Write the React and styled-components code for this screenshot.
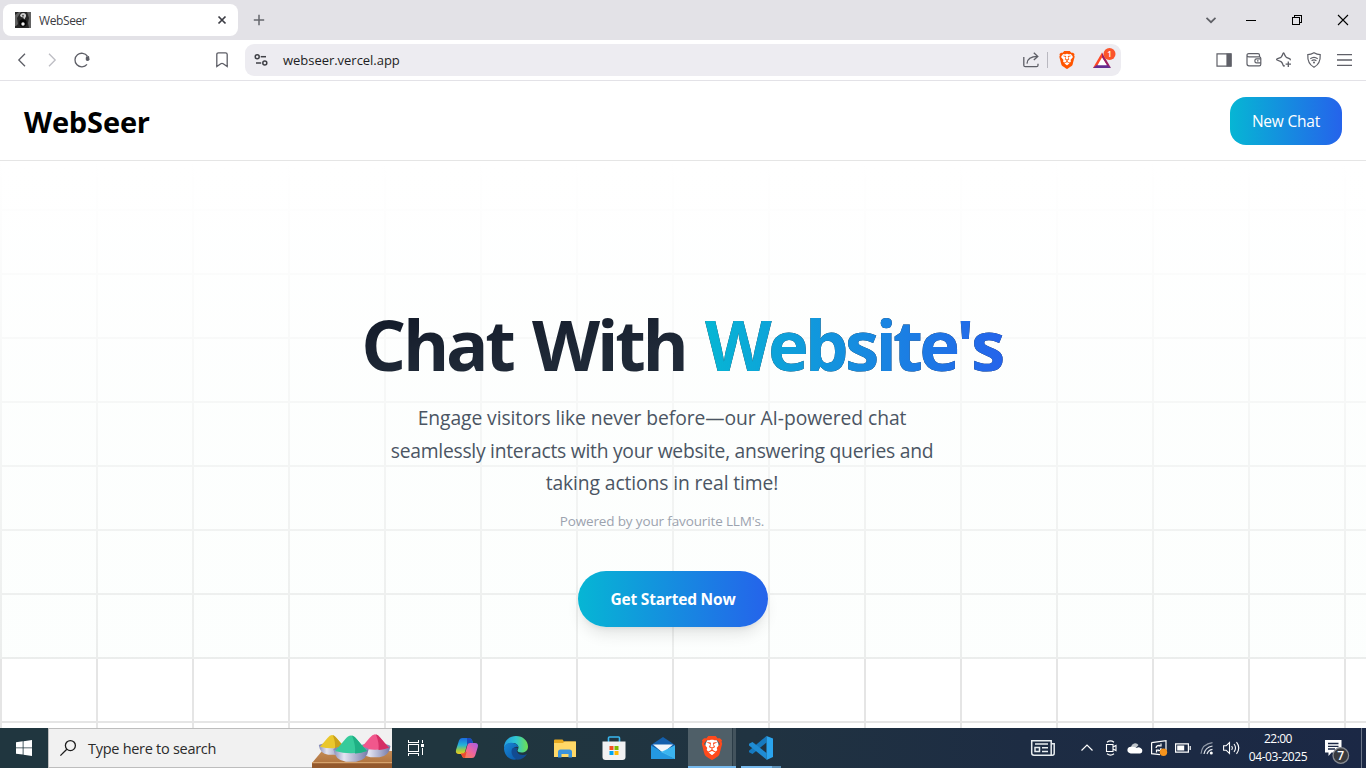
import React from "react";
import styled, { createGlobalStyle } from "styled-components";
import { SiBrave } from "react-icons/si";

const GlobalStyle = createGlobalStyle`
  * { box-sizing: border-box; }
  body { margin: 0; overflow: hidden; background: #fff; }
  #root { width: 1366px; height: 768px; }
`;

const sans = `"Open Sans", "Noto Sans", sans-serif`;

const Screen = styled.div`
  display: flex;
  flex-direction: column;
  width: 1366px;
  height: 768px;
  overflow: hidden;
  font-family: ${sans};
  white-space: nowrap;
  svg { display: block; flex: none; overflow: visible; }
`;

const Text = styled.span`
  font-size: ${(p) => p.$size}px;
  font-weight: ${(p) => p.$weight || 400};
  letter-spacing: ${(p) => p.$track || 0}px;
  color: ${(p) => p.$color || "inherit"};
  line-height: ${(p) => (p.$line ? p.$line + "px" : "normal")};
`;

/* ---------- browser ---------- */

const TabStrip = styled.div`
  display: flex;
  align-items: center;
  height: 40px;
  padding-left: 3px;
  background: #e3e2e7;
`;

const Tab = styled.div`
  display: flex;
  align-items: center;
  width: 235px;
  height: 32px;
  padding: 0 10px 0 12px;
  border-radius: 8px;
  background: #fff;
  ${Text} { margin-left: 8px; flex: 1; }
`;

const Cell = styled.div`
  display: flex;
  flex: none;
  align-items: center;
  justify-content: center;
  width: ${(p) => p.$w}px;
  height: 100%;
`;

const Spacer = styled.div`
  flex: 1;
`;

const Toolbar = styled.div`
  display: flex;
  align-items: center;
  height: 41px;
  padding: 0 7px;
  border-bottom: 1px solid #e3e2e7;
  background: #fff;
`;

const BookmarkSlot = styled(Cell)`
  margin-left: 110px;
  margin-right: 8px;
`;

const AddressBar = styled.div`
  display: flex;
  align-items: center;
  width: 876px;
  height: 32px;
  margin-right: 88px;
  border-radius: 9px;
  background: #edecf1;
  ${Text} { margin-left: 6px; }
`;

const Divider = styled.div`
  width: 1px;
  height: 16px;
  margin: 0 4px 0 1px;
  background: #b9b8c0;
`;

/* ---------- site ---------- */

const Site = styled.main`
  display: flex;
  flex-direction: column;
  height: 647px;
  background-color: #fff;
  background-image:
    linear-gradient(to right, #e5e5e5 2px, transparent 2px),
    linear-gradient(to bottom, #e5e5e5 2px, transparent 2px);
  background-size: 96px 64px;
`;

const SiteHeader = styled.header`
  display: flex;
  align-items: center;
  justify-content: space-between;
  height: 80px;
  padding: 0 24px;
  border-bottom: 1px solid #e5e5e5;
  background: #fff;
`;

const Brand = styled(Text)`
  padding-top: 2px;
`;

const GradientButton = styled.button`
  display: flex;
  align-items: center;
  justify-content: center;
  width: ${(p) => p.$w}px;
  height: ${(p) => p.$h}px;
  padding: 0;
  border: 0;
  border-radius: ${(p) => p.$radius}px;
  font-family: inherit;
  color: #fff;
  background: linear-gradient(to right, #06b6d4, #2563eb);
`;

const Hero = styled.section`
  display: flex;
  flex-direction: column;
  align-items: center;
  height: 498px;
  padding-top: 147px;
  background: linear-gradient(to bottom, #fff, rgba(252, 254, 253, 0.72) 50%, rgba(247, 253, 250, 0.35));
`;

const Title = styled.h1`
  margin: 0;
  font-size: 70.5px;
  line-height: 72px;
  font-weight: 700;
  letter-spacing: -3.3px;
  word-spacing: 4.5px;
  color: transparent;
  background: linear-gradient(to bottom right, #111827, #1f2937 50%, #1f2937);
  background-clip: text;
`;

const TitleAccent = styled.span`
  padding-right: 3px;
  font-size: 69px;
  letter-spacing: -3.7px;
  color: transparent;
  background: linear-gradient(to right, #06b6d4, #2563eb);
  background-clip: text;
`;

const Lead = styled.p`
  display: flex;
  flex-direction: column;
  align-items: center;
  margin: 22px 42px 0 0;
  color: #4b5563;
`;

const Note = styled.p`
  display: flex;
  margin: 11px 42px 40px 0;
  color: #9ca3af;
`;

const StartButton = styled(GradientButton)`
  margin-right: 20px;
  box-shadow: 0 10px 15px -3px rgba(0, 0, 0, 0.1), 0 4px 6px -4px rgba(0, 0, 0, 0.1);
`;

/* ---------- taskbar ---------- */

const Taskbar = styled.footer`
  display: flex;
  height: 40px;
  background: linear-gradient(to right, #20363f, #20363f 35%, #203341 55%, #1d2c43 75%, #1b2845);
  color: #fff;
`;

const SearchBox = styled.div`
  display: flex;
  align-items: center;
  width: 344px;
  height: 40px;
  padding-left: 11px;
  border: 1px solid #bdbdbd;
  border-right: 0;
  background: #f1f1f1;
  ${Text} { margin-left: 12px; flex: 1; }
`;

const TaskViewCell = styled(Cell)`
  margin-right: 4px;
`;

const AppCell = styled.div`
  display: flex;
  align-items: center;
  justify-content: center;
  width: 48px;
  height: 40px;
  margin-right: 1px;
  background: ${(p) => (p.$active ? "linear-gradient(to right, #4f5f68 44px, #2b3c47 44px, #2b3c47 45px, #43535d 45px)" : "none")};
  box-shadow: ${(p) => (p.$active ? "inset 0 -2px #76b9ed" : "none")};
`;

const RunningCell = styled(AppCell)`
  background: linear-gradient(to right, transparent 4px, #76b9ed 4px, #76b9ed 35px, #5a8eb5 35px, #5a8eb5 44px, transparent 44px) bottom / 100% 2px no-repeat;
`;

const Clock = styled.div`
  display: flex;
  flex-direction: column;
  align-items: center;
  justify-content: center;
  width: 70px;
`;

const ShowDesktop = styled.div`
  width: 5px;
  border-left: 1px solid #6b7588;
`;

/* ---------- icons ---------- */

const Svg = ({ w = 16, h, children, c = "#5f6068", s = 1.3, ...rest }) => (
  <svg width={w} height={h || w} viewBox={`0 0 ${w} ${h || w}`} fill="none" stroke={c} strokeWidth={s} {...rest}>
    {children}
  </svg>
);

const Favicon = () => (
  <Svg stroke="none">
    <rect width="16" height="16" fill="#262626" />
    <path d="M0 3 4 0h2L2 6 3 12 1 14H0ZM12 0h4v16h-2l-1-5 1-5Z" fill="#626262" />
    <path d="M5 3.500Q5.500 1 8 1q3.500 0 3 3.500L9 8 8.500 5.500 6 5Z" fill="#d0d0d0" />
    <circle cx="8" cy="3.700" r="1" fill="#555" />
    <circle cx="8" cy="11" r="3.700" fill="#050505" />
    <circle cx="8" cy="12" r="1.700" fill="#f2f2f2" />
  </Svg>
);

const TabClose = () => (
  <Svg w={12} c="#3c3d44" s={1.7}><path d="m2.500 2.500 7 7m0-7-7 7" /></Svg>
);
const Plus = () => <Svg w={12} c="#66676e" s={1.5}><path d="M6 .8v10.400M.8 6h10.400" /></Svg>;
const TabSearch = () => <Svg w={12} c="#5f6066" s={1.7}><path d="m1.500 3.800 4.500 4.400 4.500-4.400" /></Svg>;
const Minimize = () => <Svg w={10} c="#000" s={1} shapeRendering="crispEdges"><path d="M0 5.500h10" /></Svg>;
const Restore = () => (
  <Svg w={10} c="#000" s={1} shapeRendering="crispEdges"><path d="M.5 2.500h7v7h-7zM2.500 2.500v-2h7v7h-2" /></Svg>
);
const WinClose = () => <Svg w={10} c="#000" s={1.1}><path d="m0 0 10 10M10 0 0 10" /></Svg>;

const Back = () => <Svg c="#5d5e66"><path d="M11 1.700 4.800 8l6.200 6.300" /></Svg>;
const Forward = () => <Svg c="#bdbdc3"><path d="m5 1.700 6.200 6.300L5 14.300" /></Svg>;
const Reload = () => (
  <Svg c="#5d5e66">
    <path d="M13 12.400A6.800 6.800 0 1 1 13.400 4.200" />
    <path d="m12 4.600 3-.6.500 3.300a1.900 1.900 0 0 1-3.800-.3Z" fill="#5d5e66" stroke="none" />
  </Svg>
);
const Bookmark = () => (
  <Svg c="#5d5e66"><path d="M2.800 14.600V2.500Q2.800.8 4.500.8h7q1.700 0 1.700 1.700v12.100L9.200 11.800Q8 11 6.800 11.800Z" /></Svg>
);
const Tune = () => (
  <Svg w={14} c="#3f4046" s={1.5}>
    <circle cx="3.200" cy="3.700" r="2" /><path d="M6.700 3.700H12" />
    <circle cx="10.800" cy="10" r="2" /><path d="M2 10h5.200" />
  </Svg>
);
const Share = () => (
  <Svg c="#5d5e66">
    <path d="M.8 5v8.200q0 1.500 1.500 1.500h11.200q1.500 0 1.500-1.500v-1.500" />
    <path d="M4 11.600C4.300 6.800 7.800 4.400 14.600 4.400M10.800.7l4 3.700-4 3.700" />
  </Svg>
);
const BraveMark = ({ w, h, c }) => (
  <Svg w={w} h={h} stroke="none">
    <ellipse cx={w / 2} cy={h * 0.45} rx={w * 0.34} ry={h * 0.37} fill="#fff" />
    <SiBrave size={h} x={(w - h) / 2} y={0} color={c} />
  </Svg>
);
const Rewards = () => (
  <Svg w={20} h={20} stroke="none">
    <path d="M10 2.500 1 18h3.800L10 9Z" fill="#ff4724" />
    <path d="M10 2.500 19 18l-4-2.500L10 8Z" fill="#9e1f63" />
    <path d="M1 18h18l-4-3.200H5.200Z" fill="#662d91" />
    <path d="m10 7.500 4.800 7.800H5.500Z" fill="#fff" />
    <circle cx="17.500" cy="4" r="6" fill="#fb542b" />
    <text x="17.500" y="6.900" textAnchor="middle" fontSize="8" fontWeight="600" fill="#fff" fontFamily="Open Sans">1</text>
  </Svg>
);
const SidePanel = () => (
  <Svg s={1.2}><path d="M1 1.800h14v12.400H1z" /><path d="M11 2h4v12h-4z" fill="#5f6068" /></Svg>
);
const Wallet = () => (
  <Svg s={1.2}>
    <path d="M1 3.200v8.600q0 2 2 2h10.200q1.600 0 1.600-1.600V6.400q0-1.600-1.600-1.600H3Q1 4.800 1 3.200T3 1.700h9q1.500 0 1.500 1.600v1.500" />
    <path d="M14.800 6.900h-4.300a1.600 1.600 0 0 0-1.600 1.600v.8q0 1.600 1.600 1.600h4.300" /><path d="M11 8.900h1.500" />
  </Svg>
);
const Sparkle = () => (
  <Svg s={1.3} strokeLinejoin="round">
    <path d="M8.600 13.400Q7.900 14.600 7.300 13.600 6.300 10.500 5 9.600L1 8q-.8-.5 0-1.100l4-1.600Q6.100 4.300 7 1.500q.6-1 1.100 0Q9.100 4.400 10.300 5.300L14 6.900q.8.600-.2 1.200" />
    <path d="M12.300 9.500v5.400M9.600 12.200H15" />
  </Svg>
);
const Vpn = () => (
  <Svg s={1.2}>
    <path d="M8 .7q3 1.800 6.200 1.900.6 9-6.200 12.700Q1.200 11.600 1.800 2.600 5 2.500 8 .7Z" />
    <path d="M4.300 6.800Q8 4 11.700 6.800M5.600 8.700q2.400-1.800 4.800 0" /><circle cx="8" cy="10.500" r="1" fill="#5f6068" stroke="none" />
  </Svg>
);
const Menu = () => <Svg w={15} h={14} s={1.3}><path d="M0 1.700h15M0 7h15M0 12.300h15" /></Svg>;

const WinLogo = () => (
  <Svg stroke="none"><path fill="#fff" d="M0 2.200 6.700 1.300v6.200H0ZM7.500 1.200 16 0v7.500H7.500ZM0 8.300h6.700v6.300L0 13.700ZM7.500 8.300H16V16l-8.500-1.200Z" /></Svg>
);
const SearchGlyph = () => <Svg c="#1c1c1c" s={1.3}><circle cx="10.400" cy="5.600" r="5" /><path d="M6.800 9.200.4 15.600" /></Svg>;

const Bowl = ({ x, y, k, light, dark }) => (
  <g transform={`translate(${x} ${y}) scale(${k})`}>
    <ellipse cx="0" cy="0" rx="17.500" ry="3.500" fill="#8388b4" />
    <path d="M-17.500 0Q-16 11-5 12.200H5Q16 11 17.500 0 0 6-17.500 0Z" fill="url(#bowl)" />
    <path d="M-16 1.500Q-11-4-6-10Q-3-14 0-14T6-10Q11-4 16 1.500 0 6-16 1.500Z" fill={light} />
    <path d="M1-14Q4-13 6-10 11-4 16 1.500 10 4 4 3.900 5-4 1-14Z" fill={dark} />
  </g>
);
const HoliBowls = () => (
  <Svg w={80} h={38} stroke="none">
    <defs>
      <linearGradient id="bowl"><stop stopColor="#8b8fba" /><stop offset=".3" stopColor="#e4e5f2" /><stop offset="1" stopColor="#7277a6" /></linearGradient>
      <linearGradient id="wood" x2="0" y2="1"><stop stopColor="#c38b56" /><stop offset="1" stopColor="#b17440" /></linearGradient>
    </defs>
    <path d="M10 22h70v12H0Z" fill="url(#wood)" /><path d="M0 33h80v6H0Z" fill="#94592d" /><path d="M0 33h80v1.200H0Z" fill="#d6a26c" />
    <Bowl x={20} y={16.500} k={0.75} light="#eac72c" dark="#c9a11a" />
    <Bowl x={63} y={17.500} k={0.88} light="#f1578c" dark="#d42f66" />
    <Bowl x={39} y={20.500} k={1} light="#36cb9b" dark="#1fb084" />
  </Svg>
);
const TaskView = () => (
  <Svg c="#fff" s={1} shapeRendering="crispEdges">
    <path d="M.5 0v2.500h10V0M.5 16v-2.500h10V16M.5 4.500h10v7H.5zM14.500 0v3M14.500 8v7" /><path d="M13 4h3v3h-3z" fill="#fff" stroke="none" />
  </Svg>
);
const Copilot = () => (
  <Svg w={22} h={20} stroke="none">
    <defs>
      <linearGradient id="cpA" x2="0" y2="1"><stop stopColor="#1a6be0" /><stop offset=".45" stopColor="#24b3d8" /><stop offset=".75" stopColor="#9ccb45" /><stop offset="1" stopColor="#f3c91e" /></linearGradient>
      <linearGradient id="cpB" x1="1" x2="0" y2="1"><stop stopColor="#a65be8" /><stop offset=".5" stopColor="#f1659b" /><stop offset="1" stopColor="#fb8a35" /></linearGradient>
    </defs>
    <path d="M6 0h7q2.500 0 3.200 2.500L17 5h-3q-2.500 0-3.200 2.500L9 14q-.6 2-2.500 2H3Q-.8 16 0 12L3 2.500Q3.800 0 6 0Z" fill="url(#cpA)" />
    <path d="M11 0h2q2.500 0 3.200 2.500L17 5h-3q-2.200 0-3 2Z" fill="#1c49bd" />
    <path d="M16 20H9q-2.500 0-3.200-2.500L5 15.500h2q2 0 2.600-2L11.500 7q.8-2 2.500-2h5q3.800 0 2.800 4l-2.600 8.500Q18.400 20 16 20Z" fill="url(#cpB)" />
    <path d="m5 15.500.8 2Q6.500 20 9 20l1.500-6H9.400q-.6 1.500-2.400 1.500Z" fill="#ee4c2d" />
  </Svg>
);
const Edge = () => (
  <Svg w={24} stroke="none">
    <defs>
      <linearGradient id="edA"><stop stopColor="#249de0" /><stop offset=".5" stopColor="#30c7d2" /><stop offset="1" stopColor="#6fe14e" /></linearGradient>
      <linearGradient id="edB" x2="1" y2="1"><stop stopColor="#1788d6" /><stop offset="1" stopColor="#0b55a6" /></linearGradient>
    </defs>
    <path d="M0 12C0 4.500 5.500 0 12 0c7 0 12 5 12 10.500 0 4-3 6-6.500 6-2.500 0-4-1-4-2 0-.8 1-1.300 1-3 0-2.800-2.500-4.600-5.500-4.600C4 6.900 1 9.500 0 12Z" fill="url(#edA)" />
    <path d="M0 12c1-4 4.500-6 9-5.100 3 .6 5.500 2.100 5.500 4.600-1-1.500-6-.5-6 4 0 3 2 6 5 7.500C7 25.700 0 20 0 12Z" fill="url(#edB)" />
    <path d="M8 13c-1.500 4 .5 8.500 5.500 10.800C18 23.500 21 21.500 23 18c-3 1.500-7.500 1.500-9.500-1.500-1-1.500-1-3 .5-4-2-1.500-5-1-6 .5Z" fill="#124b91" />
  </Svg>
);
const Explorer = () => (
  <Svg w={22} h={19} stroke="none">
    <path d="M0 1.500Q0 .5 1 .5h7.500l1.500 2h11q1 0 1 1V17H0Z" fill="#e7a920" />
    <path d="M0 4h9l1.500-1.500H22V18H0Z" fill="#ffd867" />
    <path d="M4 18.500V13q0-2.500 2.500-2.500h9Q18 10.500 18 13v5.500h-3.500V15h-7v3.500Z" fill="#3a93dd" />
  </Svg>
);
const Store = () => (
  <Svg w={24} stroke="none">
    <path d="M6.500 6V2q0-1 1-1h9q1 0 1 1v4" stroke="#38b6ee" strokeWidth="1.600" />
    <path d="M.5 5.500h23V21q0 3-3 3h-17q-3 0-3-3Z" fill="#f1f1f2" />
    <path d="M7.500 10h4v4h-4z" fill="#f25022" /><path d="M12.500 10h4v4h-4z" fill="#7fba00" />
    <path d="M7.500 15h4v4h-4z" fill="#00a4ef" /><path d="M12.500 15h4v4h-4z" fill="#ffb900" />
  </Svg>
);
const Mail = () => (
  <Svg w={24} h={22} stroke="none">
    <path d="M0 8 12 0l12 8v5H0Z" fill="#1460ad" /><path d="M2 7.500h20L12 16Z" fill="#f2f7fb" />
    <path d="M0 8.500 12 15.500 24 22H0Z" fill="#2498e0" /><path d="M24 8.500V22L10 15Z" fill="#4ac0f4" /><path d="M24 8.500V22l-12-7Z" fill="#3bb4ef" />
  </Svg>
);
const Code = () => (
  <Svg w={24} stroke="none">
    <path d="M17.500 0v6.500L3.500 18 0 16.300v-1.500Z" fill="#1679bf" />
    <path d="M0 7.800 3.500 6l14 11v6.500L0 9.500Z" fill="#1f8cd4" />
    <path d="m17.500 0 6.500 2.500v18.600L17.500 24Z" fill="#2aa4ee" />
  </Svg>
);

const News = () => (
  <Svg w={24} h={16} c="#e8edf0" s={1.5}>
    <path d="M.7.700h19.500V15.200H3Q.7 15.200.7 13ZM20.200 3.700h3v9.500q0 2-2 2H18" />
    <path d="M4 4h13M11 7.800h6M11 11.500h6M4 7.500h4.500v4H4z" />
  </Svg>
);
const TrayUp = () => <Svg w={12} h={8} c="#fff" s={1.2}><path d="m.5 6.500 5.500-5.500 5.500 5.500" /></Svg>;
const MeetNow = () => (
  <Svg w={12} h={16} c="#fff" s={1.1}><path d="M1.500 4.500h6.500v7H1.500zM8 7l3-1.500v5L8 9M2 2.200Q5.500-.5 9 2.200M2 13.800q3.500 2.700 7 0" /></Svg>
);
const Cloud = () => (
  <Svg w={16} h={12} stroke="none">
    <path d="M4 5A4.200 4.200 0 0 1 11.500 3L8 7Z" fill="#bfc5cb" /><path d="M3.800 11.500a3.400 3.400 0 1 1 .8-6.700q2-.6 5 1.200 2-1.300 4 0a2.900 2.900 0 0 1-.5 5.500Z" fill="#fff" />
  </Svg>
);
const Update = () => (
  <Svg w={16} c="#fff" s={1.2}>
    <path d="M.6 2.600 15 .7V10M.6 2.600v11L9 14.600" /><path d="M5 8q.5-3 4-2.500M10 3.500V6H7.500M10 8q0 3-3.500 2.700M5.500 12.500V10H8" />
    <circle cx="12.500" cy="12.300" r="3.700" fill="#f7941d" stroke="none" />
  </Svg>
);
const Battery = () => (
  <Svg w={16} h={10} c="#fff" s={1.2}><path d="M.6.800h12.800v8.400H.6zM15.200 3v4" /><path d="M2.200 2.500h7v5h-7z" fill="#fff" stroke="none" /></Svg>
);
const Wifi = () => (
  <Svg w={14} c="#e0e4ea" s={1.2}>
    <path d="M1 12.800Q2 3 12.500 1.700" opacity=".6" /><path d="M4 13Q5 6.500 12.500 5M7 13Q8 9 12.500 8.300" /><circle cx="11.300" cy="12" r="1.500" fill="#fff" stroke="none" />
  </Svg>
);
const Volume = () => (
  <Svg w={17} h={14} c="#fff" s={1.1}><path d="M.6 4.800h2.500L6.500 1.500v11L3.100 9.200H.6ZM8.700 5q1.500 2 0 4M11 3q3 4 0 8M13.500 1.200q4.500 5.800 0 11.600" /></Svg>
);
const Notify = () => (
  <Svg w={24} h={16} stroke="none">
    <path d="M0 0h16.500v12.500H6.500L3.500 16v-3.500H0Z" fill="#fff" /><path d="M3 3.500h10.500M3 6.300h10.500M3 9h7" stroke="#1b2845" />
    <circle cx="15.800" cy="15.500" r="7.800" fill="#383a3e" stroke="#888c92" />
    <text x="15.800" y="20" textAnchor="middle" fontSize="12" fontWeight="600" fill="#fff" fontFamily="Open Sans">7</text>
  </Svg>
);

export default function App() {
  return (
    <Screen>
      <GlobalStyle />
      <TabStrip>
        <Tab>
          <Favicon />
          <Text $size={12} $track={-0.4} $color="#3b3c43">WebSeer</Text>
          <TabClose />
        </Tab>
        <Cell $w={42}><Plus /></Cell>
        <Spacer />
        <Cell $w={34}><TabSearch /></Cell>
        <Cell $w={46}><Minimize /></Cell>
        <Cell $w={46}><Restore /></Cell>
        <Cell $w={46}><WinClose /></Cell>
      </TabStrip>
      <Toolbar>
        <Cell $w={30}><Back /></Cell>
        <Cell $w={30}><Forward /></Cell>
        <Cell $w={30}><Reload /></Cell>
        <BookmarkSlot $w={30}><Bookmark /></BookmarkSlot>
        <AddressBar>
          <Cell $w={32}><Tune /></Cell>
          <Text $size={13} $track={-0.03} $color="#1d1e24">webseer.vercel.app</Text>
          <Spacer />
          <Cell $w={30}><Share /></Cell>
          <Divider />
          <Cell $w={30}><BraveMark w={16} h={18} c="#ff5500" /></Cell>
          <Cell $w={39}><Rewards /></Cell>
        </AddressBar>
        <Cell $w={30}><SidePanel /></Cell>
        <Cell $w={30}><Wallet /></Cell>
        <Cell $w={30}><Sparkle /></Cell>
        <Cell $w={30}><Vpn /></Cell>
        <Cell $w={30}><Menu /></Cell>
      </Toolbar>

      <Site>
        <SiteHeader>
          <Brand $size={29} $weight={700} $track={-0.15} $color="#000">WebSeer</Brand>
          <GradientButton $w={112} $h={48} $radius={16}>
            <Text $size={15.5} $track={-0.2}>New Chat</Text>
          </GradientButton>
        </SiteHeader>
        <Hero>
          <Title>Chat With <TitleAccent>Website's</TitleAccent></Title>
          <Lead>
            <Text $size={19.3} $line={32.5} $track={-0.08}>Engage visitors like never before—our AI-powered chat</Text>
            <Text $size={19.3} $line={32.5} $track={-0.26}>seamlessly interacts with your website, answering queries and</Text>
            <Text $size={19.3} $line={32.5} $track={-0.11}>taking actions in real time!</Text>
          </Lead>
          <Note><Text $size={13.5} $line={20} $track={-0.14}>Powered by your favourite LLM's.</Text></Note>
          <StartButton $w={190} $h={56} $radius={28}>
            <Text $size={15.5} $weight={700} $track={-0.2}>Get Started Now</Text>
          </StartButton>
        </Hero>
      </Site>

      <Taskbar>
        <Cell $w={48}><WinLogo /></Cell>
        <SearchBox>
          <SearchGlyph />
          <Text $size={14.5} $track={-0.28} $color="#2b2b2b">Type here to search</Text>
          <HoliBowls />
        </SearchBox>
        <TaskViewCell $w={47}><TaskView /></TaskViewCell>
        <AppCell><Copilot /></AppCell>
        <AppCell><Edge /></AppCell>
        <AppCell><Explorer /></AppCell>
        <AppCell><Store /></AppCell>
        <AppCell><Mail /></AppCell>
        <AppCell $active><BraveMark w={20} h={24} c="#ff4a1c" /></AppCell>
        <RunningCell><Code /></RunningCell>
        <Spacer />
        <Cell $w={64}><News /></Cell>
        <Cell $w={24}><TrayUp /></Cell>
        <Cell $w={24}><MeetNow /></Cell>
        <Cell $w={24}><Cloud /></Cell>
        <Cell $w={24}><Update /></Cell>
        <Cell $w={24}><Battery /></Cell>
        <Cell $w={24}><Wifi /></Cell>
        <Cell $w={24}><Volume /></Cell>
        <Clock>
          <Text $size={12} $line={18} $track={-0.55}>22:00</Text>
          <Text $size={12} $line={18} $track={-0.42}>04-03-2025</Text>
        </Clock>
        <Cell $w={48}><Notify /></Cell>
        <ShowDesktop />
      </Taskbar>
    </Screen>
  );
}
